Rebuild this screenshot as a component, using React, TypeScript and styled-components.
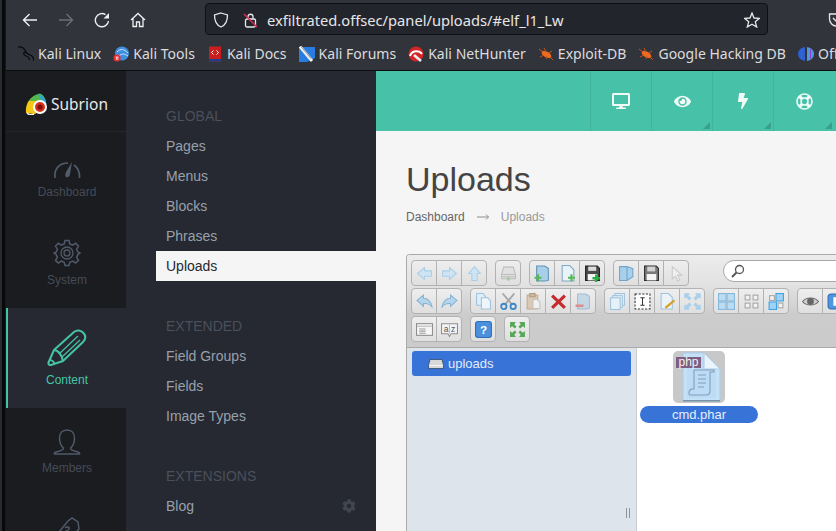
import React from "react";
import styled, { createGlobalStyle } from "styled-components";
import { FaDesktop, FaEye, FaBolt, FaRegLifeRing, FaCog } from "react-icons/fa";

const Global = createGlobalStyle`
  html, body {
    margin: 0;
    padding: 0;
    width: 836px;
    height: 531px;
    overflow: hidden;
    background: #101114;
  }
  * { box-sizing: border-box; }
`;

const Sans = `"Liberation Sans", Arial, sans-serif`;
const Ui = `"Noto Sans", "Open Sans", sans-serif`;

const Blue = "#a9cfe8";
const BlueD = "#86b4d4";

const ToolIcon = ({ name }: { name: string }) => {
  const arrow = "M1.5 8 L8 2.5 V5.5 H14.5 V10.5 H8 V13.5 Z";
  const doc = "M3 0.5 H10 L14 4.5 V15 H3 Z";
  const folder = "M2.5 1 H10 L13.5 3 V14.5 L10 15 H2.5 Z";
  return (
    <svg width="17" height="17" viewBox="0 0 16 16">
      {name === "back" && <path d={arrow} fill="#cfe4f3" stroke={Blue} />}
      {name === "forward" && <path d={arrow} fill="#cfe4f3" stroke={Blue} transform="rotate(180 8 8)" />}
      {name === "up" && <path d={arrow} fill="#cfe4f3" stroke={Blue} transform="rotate(90 8 8)" />}
      {name === "disk" && (
        <g opacity=".55">
          <path d="M3.5 2 H12.5 L14.5 9 V13 H1.5 V9 Z" fill="#dcdcdc" stroke="#9c9c9c" />
          <path d="M2 9 H14 M2 11 H14" stroke="#9c9c9c" />
          <circle cx="8" cy="13" r="1.8" fill="#6cc06c" />
        </g>
      )}
      {name === "newfolder" && (
        <g>
          <path d={folder} fill="#a9cfe8" stroke="#5e93b5" />
          <path d="M0.5 12 H7 M3.7 8.8 V15.2" stroke="#55b855" strokeWidth="2" />
        </g>
      )}
      {name === "newfile" && (
        <g>
          <path d={doc} fill="#eaf3fa" stroke="#7fa9c6" />
          <path d="M8.5 12 H15 M11.7 8.8 V15.2" stroke="#55b855" strokeWidth="2" />
        </g>
      )}
      {name === "upload" && (
        <g>
          <path d="M1.5 1 H12.5 L14.5 3 V14.5 H1.5 Z" fill="#4a4a4a" stroke="#1c1c1c" />
          <rect x="4" y="1.5" width="7.5" height="4" fill="#dcdcdc" />
          <rect x="3.5" y="8.5" width="9" height="6" fill="#f4f4f4" />
          <path d="M8 12.5 H15 M11.5 9 V16" stroke="#23b043" strokeWidth="2.2" />
        </g>
      )}
      {name === "save" && (
        <g>
          <path d="M1.5 1 H12.5 L14.5 3 V14.5 H1.5 Z" fill="#7a7a7a" stroke="#2a2a2a" />
          <rect x="4" y="1.5" width="7.5" height="4.5" fill="#d4d4d4" />
          <rect x="3.5" y="8.5" width="9" height="6" fill="#f6f6f6" />
        </g>
      )}
      {name === "open" && (
        <g>
          <path d="M1.5 1.5 H8.5 L14 3.5 V11 L8.5 14.5 H1.5 Z" fill="#a9d0ea" stroke="#6fa5cc" />
          <path d="M8.5 1.5 V14.5" stroke="#6fa5cc" />
        </g>
      )}
      {name === "cursor" && <path d="M4 1.5 V13 L7 10.5 L9 15 L11 14 L9 9.5 H13 Z" fill="#efefef" stroke="#c9c9c9" />}
      {name === "undo" && <path d="M1 7 L7 2 V5 C11 5 14.5 8 15 13 C13 10.5 10 9.5 7 10 V12.5 Z" fill="#b4d5ec" stroke={BlueD} />}
      {name === "redo" && <path d="M15 7 L9 2 V5 C5 5 1.5 8 1 13 C3 10.5 6 9.5 9 10 V12.5 Z" fill="#b4d5ec" stroke={BlueD} />}
      {name === "copy" && (
        <g>
          <path d="M1.5 0.5 H7.5 L10 3.5 V11.5 H1.5 Z" fill="#dfeef8" stroke="#9fc3dc" />
          <path d="M6 4.5 H12 L14.5 7.5 V15 H6 Z" fill="#eef6fb" stroke="#9fc3dc" />
        </g>
      )}
      {name === "cut" && (
        <g fill="none" strokeWidth="1.7">
          <path d="M2.5 0.5 L11 10.5 M13.5 0.5 L5 10.5" stroke="#a5a5a5" />
          <circle cx="3.6" cy="12.6" r="2.5" stroke="#3d87c7" />
          <circle cx="12.4" cy="12.6" r="2.5" stroke="#3d87c7" />
        </g>
      )}
      {name === "paste" && (
        <g opacity=".85">
          <rect x="2" y="2" width="10" height="13" fill="#d8c4ab" stroke="#b9a283" />
          <rect x="4.5" y="0.5" width="5" height="3" fill="#c9b394" stroke="#a68f70" />
          <path d="M7.5 6 H11.5 L14 8.5 V14.5 H7.5 Z" fill="#f2f2f2" stroke="#bdbdbd" />
        </g>
      )}
      {name === "delete" && <path d="M2 2.5 L14 14 M14 2.5 L2 14" stroke="#c52c2c" strokeWidth="3" />}
      {name === "remove" && (
        <g opacity=".65">
          <path d={folder} fill="#b3cfe3" stroke="#7ea6c3" />
          <path d="M0.5 12 H8" stroke="#d85f5f" strokeWidth="2.4" />
        </g>
      )}
      {name === "stack" && (
        <g fill="#e6f1f8" stroke="#9fc3dc">
          <rect x="5.5" y="0.5" width="9" height="11" />
          <rect x="3.5" y="2.5" width="9" height="11" />
          <rect x="1.5" y="4.5" width="9" height="11" />
        </g>
      )}
      {name === "rename" && (
        <g>
          <rect x="1" y="1" width="14" height="14" fill="#fff" stroke="#333" strokeDasharray="2 1.4" />
          <path d="M6 4.5 H10 M6 11.5 H10 M8 4.5 V11.5" stroke="#333" />
        </g>
      )}
      {name === "edit" && (
        <g>
          <path d="M2 0.5 H9 L12.5 4 V15 H2 Z" fill="#eaf3fa" stroke="#9fc3dc" />
          <path d="M6 14 L14.5 7" stroke="#d9a02b" strokeWidth="2.2" />
        </g>
      )}
      {name === "resize" && (
        <g stroke="#a7d0ea" strokeWidth="3" fill="none">
          <path d="M2 2 L6 6 M14 2 L10 6 M2 14 L6 10 M14 14 L10 10" />
          <path d="M1 5 V1 H5 M11 1 H15 V5 M1 11 V15 H5 M11 15 H15 V11" strokeWidth="1.6" />
        </g>
      )}
      {name === "icons" && (
        <g fill="#bcdcf2" stroke="#84b7dc">
          <rect x="0.5" y="0.5" width="7" height="7" />
          <rect x="8.5" y="0.5" width="7" height="7" />
          <rect x="0.5" y="8.5" width="7" height="7" />
          <rect x="8.5" y="8.5" width="7" height="7" />
        </g>
      )}
      {name === "grid" && (
        <g fill="#f2f2f2" stroke="#a5a5a5">
          <rect x="2" y="2" width="4.5" height="4.5" />
          <rect x="9.5" y="2" width="4.5" height="4.5" />
          <rect x="2" y="9.5" width="4.5" height="4.5" />
          <rect x="9.5" y="9.5" width="4.5" height="4.5" />
        </g>
      )}
      {name === "mixed" && (
        <g stroke="#3da2e6" fill="#9fd2f5">
          <rect x="1.5" y="2.5" width="4.5" height="4.5" fill="#f2f2f2" stroke="#a5a5a5" />
          <rect x="7.5" y="0.5" width="7" height="7" />
          <rect x="1" y="8.5" width="7" height="7" />
          <rect x="9.5" y="9.5" width="4.5" height="4.5" fill="#f2f2f2" stroke="#a5a5a5" />
        </g>
      )}
      {name === "eye" && (
        <g>
          <path d="M0.5 8 C4 3.5 12 3.5 15.5 8 C12 12.5 4 12.5 0.5 8 Z" fill="#cfcfcf" stroke="#6a6a6a" />
          <circle cx="8" cy="8" r="3.2" fill="#666" />
        </g>
      )}
      {name === "info" && (
        <g>
          <rect x="1" y="1" width="14" height="14" rx="3" fill="#4f96e0" stroke="#2c6cb3" />
          <rect x="6" y="4" width="4" height="8" fill="#fff" />
        </g>
      )}
      {name === "list" && (
        <g>
          <rect x="0.5" y="2.5" width="15" height="11" fill="#f6f6f6" stroke="#8e8e8e" />
          <path d="M1 5 H15" stroke="#c9c9c9" strokeWidth="1.5" />
          <path d="M3 7.5 H9 M3 9.5 H9 M3 11.5 H9" stroke="#9a9a9a" />
        </g>
      )}
      {name === "sort" && (
        <g>
          <path d="M0.5 2.5 H15.5 V12 H9.5 L8 14.5 L6.5 12 H0.5 Z" fill="#f4f4f4" stroke="#8e8e8e" />
          <text x="2.5" y="10" fontSize="8" fontFamily={Sans} fill="#555">a</text>
          <text x="9.5" y="10" fontSize="8" fontFamily={Sans} fill="#555">z</text>
          <path d="M8 3 V12" stroke="#bbb" />
        </g>
      )}
      {name === "help" && (
        <g>
          <rect x="0.5" y="0.5" width="15" height="15" rx="2.5" fill="#4a90dd" stroke="#2d6fb9" />
          <text x="8" y="12.5" fontSize="11" fontWeight="700" textAnchor="middle" fontFamily={Sans} fill="#fff">?</text>
        </g>
      )}
      {name === "full" && (
        <g fill="#55a855">
          <path d="M1 1 H6.5 L5 3 L7 5.5 L5.5 7 L3 5 L1 6.5 Z" />
          <path d="M15 1 H9.5 L11 3 L9 5.5 L10.5 7 L13 5 L15 6.5 Z" />
          <path d="M1 15 H6.5 L5 13 L7 10.5 L5.5 9 L3 11 L1 9.5 Z" />
          <path d="M15 15 H9.5 L11 13 L9 10.5 L10.5 9 L13 11 L15 9.5 Z" />
        </g>
      )}
    </svg>
  );
};

const rows: string[][][] = [
  [["back", "forward", "up"], ["disk"], ["newfolder", "newfile", "upload"], ["open", "save", "cursor"]],
  [["undo", "redo"], ["copy", "cut", "paste", "delete", "remove"], ["stack", "rename", "edit", "resize"], ["icons", "grid", "mixed"], ["eye", "info"]],
  [["list", "sort"], ["help"], ["full"]],
];

const Favicon = ({ name }: { name: string }) => (
  <svg width="16" height="16" viewBox="0 0 16 16">
    {name === "kali" && <path d="M0 1 C4 0 7 3 8 6 C9 9 13 8 15 11 L16 15 M8 6 C5 6 5 9 8 10 C11 11 12 13 11 14" fill="none" stroke="#0c0c0c" strokeWidth="1.3" />}
    {name === "tools" && (
      <g>
        <circle cx="9" cy="7.5" r="7" fill="#3f8ee0" />
        <path d="M4 6 C8 2 11 3 15 7 M6 10 C9 7 12 8 15 10" fill="none" stroke="#cfe6fa" />
        <circle cx="4" cy="12" r="3.6" fill="#e22d2d" />
        <path d="M2.6 11 H5.4 M3.4 11 V14 M4.8 11 V14" stroke="#fff" strokeWidth=".7" />
      </g>
    )}
    {name === "docs" && (
      <g>
        <rect x="2" y="0.5" width="12" height="15" fill="#c81e1e" />
        <rect x="2" y="13" width="12" height="2.5" fill="#1d3f8a" />
        <path d="M6.5 4.5 L4.5 6.5 L6.5 8.5 M9.5 4.5 L11.5 6.5 L9.5 8.5" fill="none" stroke="#fff" />
      </g>
    )}
    {name === "forums" && (
      <g>
        <path d="M0 1 H16 V12 L8 16 H0 Z" fill="#2a7de0" />
        <path d="M1 0.5 L13 15" stroke="#f1f1f1" strokeWidth="3" />
        <path d="M2 0.5 L12 12.5" stroke="#555" strokeWidth=".6" />
      </g>
    )}
    {name === "nethunter" && (
      <g>
        <circle cx="8" cy="8" r="7.5" fill="#d42525" />
        <path d="M2 10 C4 4 11 4 14 8" fill="none" stroke="#fff" strokeWidth="2" />
        <path d="M6 9 L13 15" stroke="#eee" strokeWidth="2.6" />
      </g>
    )}
    {name === "bug" && (
      <g>
        <ellipse cx="8.5" cy="8.5" rx="5.4" ry="2.8" fill="#ee6a1f" transform="rotate(30 8.5 8.5)" />
        <path d="M1 3 L5 6 M6 2 L8 6 M2 11 L6 9 M8 13 L9 10 M14 5 L11 7 M15 14 L12 11" stroke="#c9541a" />
      </g>
    )}
    {name === "off" && (
      <g>
        <path d="M7 1 C2 2 0 5 0 8 C0 11 2 14 7 15 Z" fill="#2e5fd1" />
        <path d="M9 1 C14 2 16 5 16 8 C16 11 14 14 9 15 Z" fill="#4f9ad8" />
        <path d="M3.5 3 V13 M12.5 3 V13" stroke="#8a3fd0" />
      </g>
    )}
  </svg>
);

const bookmarks = [
  ["kali", "Kali Linux"],
  ["tools", "Kali Tools"],
  ["docs", "Kali Docs"],
  ["forums", "Kali Forums"],
  ["nethunter", "Kali NetHunter"],
  ["bug", "Exploit-DB"],
  ["bug", "Google Hacking DB"],
  ["off", "OffSec"],
];

const DashIcon = () => (
  <svg width="28" height="18" viewBox="0 0 28 18" fill="none" stroke="#525c6c" strokeWidth="1.6">
    <path d="M2 17 C1 8 6 2 15 2" />
    <path d="M21 4 C25 7 27 11 26.5 17" />
    <path d="M19 1 L13 11 C12 13 12 15 13 16 C15 17 17 15 17 13 Z" fill="#525c6c" stroke="none" />
  </svg>
);

const GearIcon = () => (
  <svg width="28" height="28" viewBox="0 0 28 28" fill="none" stroke="#505a6b" strokeWidth="1.3">
    <path d="M12 1.5 H16 L16.8 5 L19.6 6.2 L22.7 4.3 L25.5 7.1 L23.6 10.2 L24.8 13 L27 14 V14 L24.8 15.6 L23.6 18.4 L25.5 21.3 L22.7 24 L19.6 22.1 L16.8 23.3 L16 26.5 H12 L11.2 23.3 L8.4 22.1 L5.3 24 L2.5 21.3 L4.4 18.4 L3.2 15.6 L1 14 L3.2 13 L4.4 10.2 L2.5 7.1 L5.3 4.3 L8.4 6.2 L11.2 5 Z" strokeWidth="1.5" />
    <circle cx="14" cy="14" r="6" />
    <circle cx="14" cy="14" r="3" />
  </svg>
);

const PencilIcon = () => (
  <svg width="40" height="38" viewBox="0 0 40 38" fill="none" stroke="#46c3a6" strokeWidth="2" strokeLinejoin="round">
    <path d="M7 21 L27 3 C30 0.5 34 1 36.5 4 C39 7 38.5 10.5 36 13 L16 32 L4 36 C2.5 36.5 1 35 1.5 33.5 Z" />
    <path d="M7 21 C11 21 15 26 16 32" />
    <path d="M3 31 C5 31 7 33 7.5 35" />
    <path d="M12 25 L31 7 M15 28 L33 11" strokeWidth="1.2" />
  </svg>
);

const UserIcon = () => (
  <svg width="28" height="26" viewBox="0 0 28 26" fill="none" stroke="#505a6b" strokeWidth="1.5">
    <path d="M14 1 C9 1 6.5 4.5 6.5 9 C6.5 13 8 17 10.5 19 C10.5 21 8 22 3 23 C1 23.5 1 25 2 25 H26 C27 25 27 23.5 25 23 C20 22 17.5 21 17.5 19 C20 17 21.5 13 21.5 9 C21.5 4.5 19 1 14 1 Z" />
  </svg>
);

const TagIcon = () => (
  <svg width="28" height="26" viewBox="0 0 28 26" fill="none" stroke="#505a6b" strokeWidth="1.5">
    <path d="M2 20 L15 4 L19 1 L25 5 L26 12 L14 24" />
    <path d="M12 11 C14 9 17 10 16 12 C15 14 11 14 12 16 C13 18 16 17 17 15" />
  </svg>
);

const ParrotLogo = () => (
  <svg width="22" height="22" viewBox="0 0 22 22">
    <path d="M1 20 C0 12 4 5 10 3 C14 2 19 3 21 9 L21 14 L10 21 Z" fill="#f3c816" />
    <path d="M4 8 C7 3 12 1 15 0.5 C19 2 21 6 21 11 L12 8 Z" fill="#54b848" />
    <path d="M13 1 C17 2 21 6 21.5 11 L16 7 Z" fill="#2da6d9" />
    <circle cx="15" cy="14" r="7" fill="#fff" />
    <circle cx="15" cy="14" r="5" fill="#d5301f" />
    <circle cx="15" cy="14" r="2.6" fill="#7e120a" />
    <path d="M2 20 C4 22 7 22 9 21" stroke="#f3f3f3" strokeWidth="1.5" fill="none" />
  </svg>
);

const BigFileIcon = () => (
  <svg width="52" height="52" viewBox="0 0 52 52">
    <path d="M10 2 H31 L47 18 V50 H10 Z" fill="#c4e1f8" stroke="#a8cdea" />
    <path d="M14 6 H30 L43 19 V47 H14 Z" fill="#bcdcf5" />
    <path d="M31 2 L47 18 H31 Z" fill="#eaf4fc" stroke="#a8cdea" />
    <rect x="10" y="49" width="37" height="1.5" fill="#7a93a8" />
    <path d="M21 19 H41 V21 H37 V40 C37 43 35 44 33 44 H17 C15 44 16 38 19 38 H21 Z" fill="none" stroke="#829eb8" strokeWidth="1.1" />
    <path d="M25 24 H33 M25 28 H33 M25 32 H33 M25 36 H31" stroke="#829eb8" strokeWidth="1.1" />
    <rect x="3" y="6" width="25" height="11" fill="#7e5f81" />
    <text x="15.5" y="15" fontSize="12" textAnchor="middle" fontFamily={Sans} fill="#f2f2f2">php</text>
  </svg>
);

const App = () => (
  <Page>
    <Global />
    <Strip />
    <Window>
      <Chrome>
        <NavBar>
          <NavBtn>
            <svg width="16" height="16" viewBox="0 0 16 16" fill="none" stroke="#f0f0f2" strokeWidth="1.4">
              <path d="M15 8 H1.5 M7.5 2 L1.5 8 L7.5 14" />
            </svg>
          </NavBtn>
          <NavBtn>
            <svg width="16" height="16" viewBox="0 0 16 16" fill="none" stroke="#6c6d74" strokeWidth="1.4">
              <path d="M1 8 H14.5 M8.5 2 L14.5 8 L8.5 14" />
            </svg>
          </NavBtn>
          <NavBtn>
            <svg width="16" height="16" viewBox="0 0 16 16" fill="none" stroke="#f0f0f2" strokeWidth="1.4">
              <path d="M14.5 9 A6.6 6.6 0 1 1 11.5 2.6" />
              <path d="M15 1 V6.5 H9.5 Z" fill="#f0f0f2" stroke="none" />
            </svg>
          </NavBtn>
          <NavBtn>
            <svg width="16" height="16" viewBox="0 0 16 16" fill="none" stroke="#f0f0f2" strokeWidth="1.3">
              <path d="M1 8 L8 1.5 L15 8 M3 6.5 V14.5 H6.5 V10 H9.5 V14.5 H13 V6.5" />
            </svg>
          </NavBtn>
          <UrlBar>
            <svg width="16" height="16" viewBox="0 0 16 16" fill="none" stroke="#e8e8ea" strokeWidth="1.3">
              <path d="M8 1 L14.5 3 C14.5 9 13 13 8 15 C3 13 1.5 9 1.5 3 Z" />
            </svg>
            <svg width="16" height="16" viewBox="0 0 16 16" fill="none" stroke="#e8e8ea" strokeWidth="1.3">
              <rect x="2.5" y="7" width="10" height="8" rx="1.5" />
              <path d="M5 7 V4.5 C5 1.5 10 1.5 10 4.5 V7" />
              <path d="M1 2 L14 15" stroke="#e22850" strokeWidth="1.4" />
            </svg>
            <Url>exfiltrated.offsec/panel/uploads/#elf_l1_Lw</Url>
            <svg width="16" height="16" viewBox="0 0 16 16" fill="none" stroke="#e8e8ea" strokeWidth="1.3">
              <path d="M8 1 L10 6 L15.5 6.3 L11.3 9.8 L12.7 15 L8 12.2 L3.3 15 L4.7 9.8 L0.5 6.3 L6 6 Z" />
            </svg>
          </UrlBar>
          <Pocket>
            <svg width="16" height="16" viewBox="0 0 16 16" fill="none" stroke="#e8e8ea" strokeWidth="1.3">
              <path d="M1.5 2 H14.5 V7 C14.5 11 11 14 8 14 C5 14 1.5 11 1.5 7 Z" />
              <path d="M5 6 L8 9 L11 6" />
            </svg>
          </Pocket>
        </NavBar>
        <Bookmarks>
          {bookmarks.map(([icon, label]) => (
            <Bookmark key={label}>
              <Favicon name={icon} />
              {label}
            </Bookmark>
          ))}
        </Bookmarks>
      </Chrome>

      <Main>
        <Sidebar>
          <Logo>
            <ParrotLogo />
            Subrion
          </Logo>
          <SideItem>
            <DashIcon />
            <SideLabel>Dashboard</SideLabel>
          </SideItem>
          <SideItem>
            <GearIcon />
            <SideLabel>System</SideLabel>
          </SideItem>
          <SideItem $active>
            <PencilIcon />
            <SideLabel $active>Content</SideLabel>
          </SideItem>
          <SideItem>
            <UserIcon />
            <SideLabel>Members</SideLabel>
          </SideItem>
          <SideItem $iconOnly>
            <TagIcon />
          </SideItem>
        </Sidebar>

        <SubNav>
          <SubHead>GLOBAL</SubHead>
          <SubLink>Pages</SubLink>
          <SubLink>Menus</SubLink>
          <SubLink>Blocks</SubLink>
          <SubLink>Phrases</SubLink>
          <SubLink $active>Uploads</SubLink>
          <SubHead $gap>EXTENDED</SubHead>
          <SubLink>Field Groups</SubLink>
          <SubLink>Fields</SubLink>
          <SubLink>Image Types</SubLink>
          <SubHead $gap>EXTENSIONS</SubHead>
          <SubLink>
            Blog
            <FaCog size={14} color="#40454f" />
          </SubLink>
        </SubNav>

        <Content>
          <TopBar>
            <TopBtn><FaDesktop size={18} /></TopBtn>
            <TopBtn $corner><FaEye size={17} /></TopBtn>
            <TopBtn $corner><FaBolt size={16} /></TopBtn>
            <TopBtn $corner><FaRegLifeRing size={17} /></TopBtn>
          </TopBar>
          <Body>
            <Title>Uploads</Title>
            <Crumbs>
              <span>Dashboard</span>
              <svg width="12" height="8" viewBox="0 0 12 8" fill="none" stroke="#8e8e8e">
                <path d="M0 4 H11.5 M9 1.5 L11.5 4 L9 6.5" />
              </svg>
              <CrumbCurrent>Uploads</CrumbCurrent>
            </Crumbs>
            <Finder>
              <Toolbar>
                {rows.map((groups, i) => (
                  <ToolRow key={i}>
                    {groups.map((group) => (
                      <ToolGroup key={group[0]}>
                        {group.map((name) => (
                          <ToolBtn key={name}>
                            <ToolIcon name={name} />
                          </ToolBtn>
                        ))}
                      </ToolGroup>
                    ))}
                    {i === 0 && (
                      <Search>
                        <svg width="14" height="14" viewBox="0 0 14 14" fill="none" stroke="#555" strokeWidth="1.3">
                          <circle cx="8.5" cy="5.5" r="4" />
                          <path d="M5.5 8.5 L1 13" strokeWidth="2" />
                        </svg>
                      </Search>
                    )}
                  </ToolRow>
                ))}
              </Toolbar>
              <FinderBody>
                <Tree>
                  <TreeRow>
                    <svg width="16" height="10" viewBox="0 0 16 10">
                      <path d="M2 0.5 H14 L15.5 6 V9.5 H0.5 V6 Z" fill="#d8d8d8" stroke="#2a3d5a" strokeWidth=".7" />
                      <path d="M1 6.5 H15" stroke="#f4f4f4" />
                    </svg>
                    uploads
                  </TreeRow>
                  <Grip />
                </Tree>
                <Files>
                  <FileCell>
                    <FileThumb>
                      <BigFileIcon />
                    </FileThumb>
                    <FileName>cmd.phar</FileName>
                  </FileCell>
                </Files>
              </FinderBody>
            </Finder>
          </Body>
        </Content>
      </Main>
    </Window>
  </Page>
);

export default App;

const Page = styled.div`
  display: flex;
  width: 836px;
  height: 531px;
  overflow: hidden;
`;

const Strip = styled.div`
  flex: 0 0 6px;
  background: linear-gradient(90deg, #2a2b30 0 2px, #08090b 2px 5px, #17181b 5px);
`;

const Window = styled.div`
  flex: 0 0 830px;
  display: flex;
  flex-direction: column;
  min-width: 0;
`;

const Chrome = styled.div`
  flex: 0 0 71px;
  background: #32343c;
  border-bottom: 1px solid #0c0c0f;
  color: #e6e6e8;
  font-family: ${Ui};
`;

const NavBar = styled.div`
  height: 36px;
  display: flex;
  align-items: center;
  padding: 3px 0 0 16px;
`;

const NavBtn = styled.div`
  width: 36px;
  height: 20px;
  margin-top: 1px;
  display: flex;
  align-items: center;
  flex: none;
`;

const UrlBar = styled.div`
  flex: 0 0 563px;
  align-self: flex-start;
  margin-left: 39px;
  height: 32px;
  background: #23252d;
  border: 1px solid #0f1014;
  border-radius: 4px;
  display: flex;
  align-items: center;
  padding: 1px 7px 0;
  gap: 14px;
  svg:last-child { margin-left: auto; }
`;

const Url = styled.span`
  font-size: 14.7px;
  color: #e6e6e8;
  margin-left: -6px;
  white-space: nowrap;
`;

const Pocket = styled.div`
  margin-left: 60px;
  flex: none;
  display: flex;
`;

const Bookmarks = styled.div`
  height: 34px;
  display: flex;
  align-items: center;
  padding: 1px 0 0 12px;
  gap: 12px;
  white-space: nowrap;
`;

const Bookmark = styled.div`
  display: flex;
  align-items: center;
  gap: 4px;
  font-size: 14px;
  letter-spacing: 0.02px;
  color: #dcdcde;
  flex: none;
`;

const Main = styled.div`
  flex: 1;
  display: flex;
  min-height: 0;
`;

const Sidebar = styled.div`
  flex: 0 0 120px;
  background: #1a1c20;
  display: flex;
  flex-direction: column;
  overflow: hidden;
`;

const Logo = styled.div`
  flex: 0 0 61px;
  display: flex;
  align-items: center;
  gap: 4px;
  padding: 5px 0 0 19px;
  border-bottom: 1px solid #24262b;
  color: #e8e8e8;
  font: 400 15.5px ${Ui};
`;

const SideItem = styled.div<{ $active?: boolean; $iconOnly?: boolean }>`
  flex: 0 0 ${(p) => (p.$active ? "100px" : "88px")};
  display: flex;
  flex-direction: column;
  align-items: center;
  justify-content: ${(p) => (p.$iconOnly ? "flex-start" : "flex-end")};
  gap: 6px;
  padding: ${(p) => (p.$iconOnly ? "21px 0 0 2px" : "0 0 21px 2px")};
  background: ${(p) => (p.$active ? "#262931" : "transparent")};
  box-shadow: ${(p) => (p.$active ? "inset 2px 0 0 #46c3a6" : "none")};
`;

const SideLabel = styled.div<{ $active?: boolean }>`
  font: 12px ${Sans};
  color: ${(p) => (p.$active ? "#46c3a6" : "#454b57")};
`;

const SubNav = styled.div`
  flex: 0 0 250px;
  background: #262931;
  padding: 30px 0 0 30px;
  font-family: ${Sans};
`;

const SubHead = styled.div<{ $gap?: boolean }>`
  height: 30px;
  line-height: 30px;
  padding-left: 10px;
  margin-top: ${(p) => (p.$gap ? "30px" : "0")};
  font-size: 14px;
  color: #4a505c;
`;

const SubLink = styled.div<{ $active?: boolean }>`
  height: 30px;
  display: flex;
  align-items: center;
  justify-content: space-between;
  padding: 0 20px 0 10px;
  font-size: 14px;
  color: ${(p) => (p.$active ? "#262931" : "#97a0ac")};
  background: ${(p) => (p.$active ? "#f5f5f5" : "transparent")};
`;

const Content = styled.div`
  flex: 1;
  min-width: 0;
  display: flex;
  flex-direction: column;
  background: #f5f5f5;
`;

const TopBar = styled.div`
  flex: 0 0 60px;
  background: #47c1a8;
  display: flex;
  padding-left: 214px;
`;

const TopBtn = styled.div<{ $corner?: boolean }>`
  position: relative;
  flex: 0 0 61px;
  display: flex;
  align-items: center;
  justify-content: center;
  color: #f0fbf8;
  border-left: 1px solid #41b49c;
  &::after {
    content: "";
    display: ${(p) => (p.$corner ? "block" : "none")};
    position: absolute;
    right: 2px;
    bottom: 2px;
    border-style: solid;
    border-width: 0 0 7px 7px;
    border-color: transparent transparent #39a08b transparent;
  }
`;

const Body = styled.div`
  flex: 1;
  min-height: 0;
  padding: 26px 0 0 30px;
  display: flex;
  flex-direction: column;
`;

const Title = styled.h1`
  margin: 0;
  font: 400 34px/44px ${Sans};
  color: #444;
`;

const Crumbs = styled.div`
  display: flex;
  align-items: center;
  gap: 12px;
  margin-top: 9px;
  font: 12px ${Sans};
  color: #666;
`;

const CrumbCurrent = styled.span`
  color: #999;
`;

const Finder = styled.div`
  margin-top: 30px;
  flex: 1;
  width: 520px;
  min-height: 0;
  display: flex;
  flex-direction: column;
  border: 1px solid #aaa;
  border-bottom: 0;
  border-radius: 4px 0 0 0;
  overflow: hidden;
`;

const Toolbar = styled.div`
  flex: 0 0 93px;
  background: linear-gradient(#ececec, #e2e2e2 30px, #cccccc 60px, #cbcbcb);
  border-bottom: 1px solid #aaa;
  padding: 5px 0 0 4px;
  display: flex;
  flex-direction: column;
  gap: 2px;
`;

const ToolRow = styled.div`
  display: flex;
  gap: 8px;
`;

const ToolGroup = styled.div`
  display: flex;
  flex: none;
  height: 26px;
  border: 1px solid #b2b2b2;
  border-radius: 4px;
  background: linear-gradient(#eeeeee, #dfdfdf);
`;

const ToolBtn = styled.div`
  width: 25px;
  display: flex;
  align-items: center;
  justify-content: center;
  border-left: 1px solid #b2b2b2;
  &:first-child { border-left: 0; width: 24px; }
`;

const Search = styled.div`
  flex: none;
  width: 200px;
  height: 22px;
  margin-left: 26px;
  background: #fff;
  border: 1px solid #a9a9a9;
  border-radius: 11px;
  display: flex;
  align-items: center;
  padding-left: 7px;
`;

const FinderBody = styled.div`
  flex: 1;
  min-height: 0;
  display: flex;
  background: #fff;
  font-family: ${Sans};
`;

const Tree = styled.div`
  position: relative;
  flex: 0 0 230px;
  background: #dde4ec;
  border-right: 1px solid #c8cdd2;
  padding: 3px 0 0 5px;
`;

const TreeRow = styled.div`
  width: 219px;
  height: 25px;
  background: #3873d8;
  border-radius: 3px;
  display: flex;
  align-items: center;
  gap: 4px;
  padding-left: 16px;
  color: #e3ecfb;
  font-size: 13px;
`;

const Grip = styled.div`
  position: absolute;
  right: 6px;
  top: 160px;
  width: 4px;
  height: 10px;
  border-left: 1px solid #8f959c;
  border-right: 1px solid #8f959c;
`;

const Files = styled.div`
  flex: 1;
  padding: 3px 0 0 3px;
`;

const FileCell = styled.div`
  width: 118px;
  display: flex;
  flex-direction: column;
  align-items: center;
  gap: 3px;
`;

const FileThumb = styled.div`
  width: 52px;
  height: 52px;
  background: #c8c8c8;
  border-radius: 5px;
`;

const FileName = styled.div`
  width: 118px;
  height: 17px;
  border-radius: 9px;
  background: #3873d8;
  color: #e6eefb;
  font-size: 13px;
  line-height: 17px;
  text-align: center;
`;
